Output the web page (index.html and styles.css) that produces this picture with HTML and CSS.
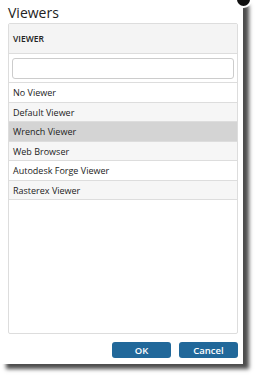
FILE: index.html
```html
<!DOCTYPE html>
<html lang="en">
<head>
<meta charset="utf-8">
<title>Viewers</title>
<link rel="stylesheet" href="styles.css">
</head>
<body>
	<div class="dialog">
		<span class="close"></span>
		<h1 class="title">Viewers</h1>
		<div class="panel">
			<div class="panel-head">VIEWER</div>
			<div class="filter">
				<input type="text" class="filter-input">
			</div>
			<ul class="list">
				<li>No Viewer</li>
				<li>Default Viewer</li>
				<li class="selected">Wrench Viewer</li>
				<li>Web Browser</li>
				<li>Autodesk Forge Viewer</li>
				<li>Rasterex Viewer</li>
			</ul>
		</div>
		<div class="actions">
			<button class="btn">OK</button>
			<button class="btn">Cancel</button>
		</div>
	</div>
</body>
</html>
```

FILE: styles.css
```css
* {
	margin: 0;
	padding: 0;
	box-sizing: border-box;
}

body {
	font: 9px/1.4 "Open Sans", "Liberation Sans", sans-serif;
	color: #222;
	background: #fff;
	width: 259px;
	height: 381px;
	overflow: hidden;
}

li {
	list-style: none;
}

.dialog {
	position: relative;
	width: 243px;
	height: 364px;
	background: #fff;
	padding: 3px 5px 0 8px;
	box-shadow: 6px 5px 4px rgba(0, 0, 0, 0.7);
}

.close {
	position: absolute;
	top: -9px;
	right: -9px;
	width: 17px;
	height: 17px;
	border-radius: 50%;
	background: #111;
	border: 2px solid #fff;
}

.title {
	font-size: 14px;
	font-weight: normal;
	color: #222;
	height: 20px;
	line-height: 20px;
}

.panel {
	width: 230px;
	height: 311px;
	border: 1px solid #ddd;
	border-radius: 2px;
}

.panel-head {
	height: 30px;
	line-height: 30px;
	padding-left: 4px;
	background: #f4f4f4;
	border-bottom: 1px solid #ddd;
	font-size: 8.5px;
	font-weight: 600;
	color: #222;
}

.filter {
	padding: 4px 3px 3px 3px;
	border-bottom: 1px solid #ddd;
}

.filter-input {
	display: block;
	width: 100%;
	height: 21px;
	border: 1px solid #ccc;
	border-radius: 3px;
	background: #fff;
}

.list li {
	height: 19.5px;
	line-height: 19px;
	padding-left: 4px;
	border-bottom: 1px solid #ddd;
}

.list li:nth-child(even) {
	background: #f6f6f6;
}

.list li.selected {
	background: #d4d4d4;
}

.actions {
	display: flex;
	justify-content: flex-end;
	gap: 8px;
	padding: 8px 0 0 0;
	width: 230px;
}

.btn {
	width: 59px;
	height: 16px;
	border: none;
	border-radius: 3px;
	background: #21689a;
	color: #fff;
	font: 600 9.5px "Open Sans", "Liberation Sans", sans-serif;
}
```
